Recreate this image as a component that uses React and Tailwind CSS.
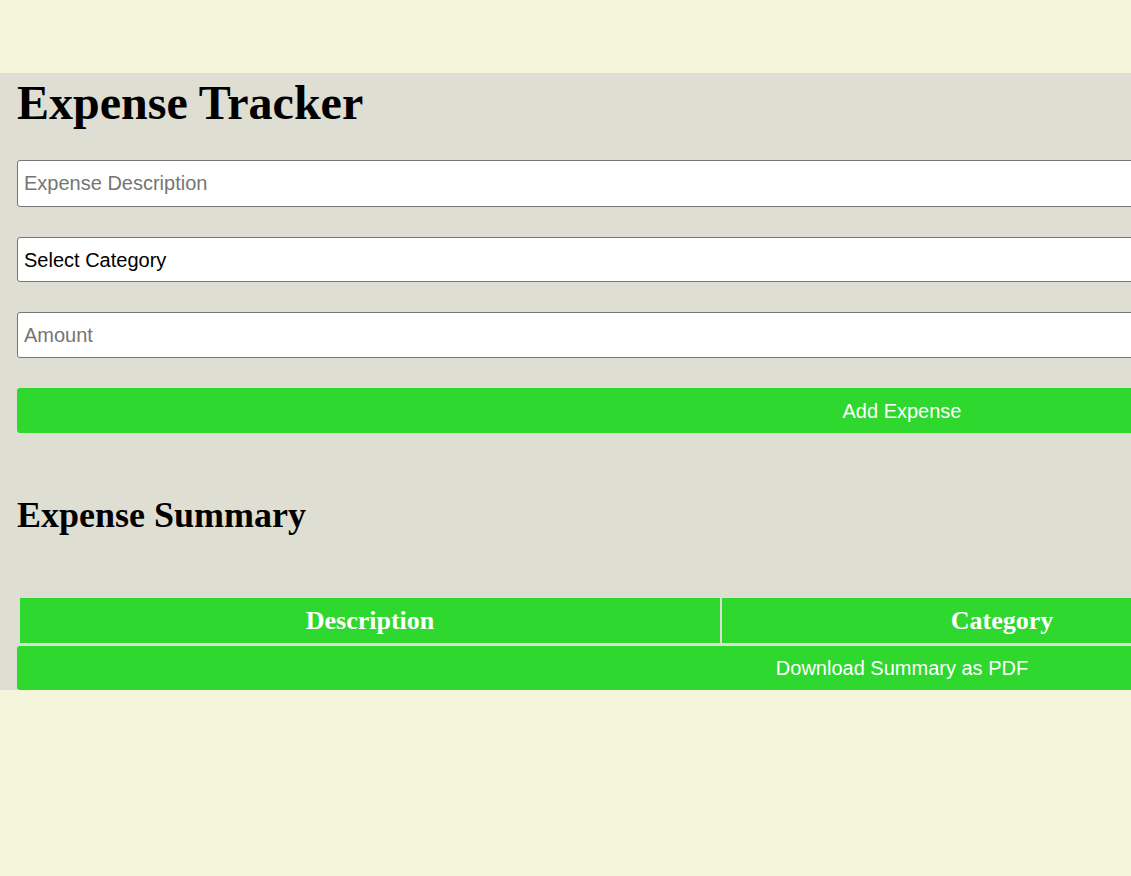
import { useState } from 'react';

const serif = { fontFamily: '"Liberation Serif", "Times New Roman", serif' };

export default function App() {
  const [form, setForm] = useState({ description: '', category: '', amount: '' });

  return (
    <div className="min-h-screen w-full overflow-hidden bg-[#f5f5dc] pt-[73px]" style={{ fontFamily: '"Liberation Sans", Arial, sans-serif' }}>
      <div className="w-[1804px] bg-[#dfded3] px-[17px] pt-[3px]">
        <h1 className="m-0 text-[48px] font-bold leading-[53px] text-black" style={serif}>
          Expense Tracker
        </h1>

        <div className="mt-[31px] flex flex-col gap-[30px]">
          <input
            value={form.description}
            onChange={(e) => setForm((f) => ({ ...f, description: e.target.value }))}
            placeholder="Expense Description"
            className="h-[47px] w-full rounded-[3px] border border-[#767676] bg-white px-[6px] text-[20px] text-black placeholder:text-[#757575]"
          />
          <select
            value={form.category}
            onChange={(e) => setForm((f) => ({ ...f, category: e.target.value }))}
            className="h-[45px] w-full rounded-[3px] border border-[#767676] bg-white px-[2px] text-[20px] text-black"
          >
            <option value="">Select Category</option>
            <option value="food">Food</option>
            <option value="transport">Transport</option>
            <option value="other">Other</option>
          </select>
          <input
            value={form.amount}
            onChange={(e) => setForm((f) => ({ ...f, amount: e.target.value }))}
            placeholder="Amount"
            type="number"
            className="h-[46px] w-full rounded-[3px] border border-[#767676] bg-white px-[6px] text-[20px] text-black placeholder:text-[#757575]"
          />
          <button type="button" className="h-[45px] w-full rounded-[3px] bg-[#2ed82e] text-[20px] text-white">
            Add Expense
          </button>
        </div>

        <h2 className="m-0 mt-[62px] text-[36px] font-bold leading-[40px] text-black" style={serif}>
          Expense Summary
        </h2>

        <table className="ml-[1px] mt-[61px] w-[1770px] border-separate border-spacing-[2px]" style={serif}>
          <thead>
            <tr>
              <th className="h-[45px] w-[700px] bg-[#2ed82e] text-[26px] font-bold text-white">Description</th>
              <th className="h-[45px] w-[560px] bg-[#2ed82e] text-[26px] font-bold text-white">Category</th>
              <th className="h-[45px] bg-[#2ed82e] text-[26px] font-bold text-white">Amount</th>
            </tr>
          </thead>
          <tbody />
        </table>

        <button type="button" className="mt-[1px] block h-[44px] w-[1770px] rounded-[3px] bg-[#2ed82e] text-[20px] text-white">
          Download Summary as PDF
        </button>
      </div>
    </div>
  );
}
